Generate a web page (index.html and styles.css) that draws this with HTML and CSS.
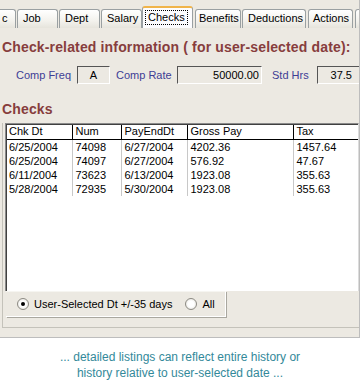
FILE: index.html
```html
<!DOCTYPE html>
<html lang="en">
<head>
  <title>Checks</title>
  <link rel="stylesheet" href="styles.css">
</head>
<body>

  <div class="app">
    <div class="tabs">
      <div class="tab tab-cut">c</div>
      <div class="tab">Job</div>
      <div class="tab">Dept</div>
      <div class="tab">Salary</div>
      <div class="tab active"><span class="focus">Checks</span></div>
      <div class="tab tab-benefits">Benefits</div>
      <div class="tab tab-deductions">Deductions</div>
      <div class="tab tab-actions">Actions</div>
      <div class="tab tab-end"></div>
    </div>

    <h2 class="title">Check-related information ( for user-selected date):</h2>

    <div class="comp-row">
      <span class="label label-freq">Comp Freq</span>
      <span class="field field-freq">A</span>
      <span class="label label-rate">Comp Rate</span>
      <span class="field field-rate">50000.00</span>
      <span class="label label-hrs">Std Hrs</span>
      <span class="field field-hrs">37.5</span>
    </div>

    <h2 class="title checks-title">Checks</h2>

    <div class="panel">
      <div class="list">
        <table class="grid">
          <thead>
            <tr>
              <th class="col-dt">Chk Dt</th>
              <th class="col-num">Num</th>
              <th class="col-end">PayEndDt</th>
              <th class="col-gross">Gross Pay</th>
              <th class="col-tax">Tax</th>
            </tr>
          </thead>
          <tbody>
            <tr><td>6/25/2004</td><td>74098</td><td>6/27/2004</td><td>4202.36</td><td>1457.64</td></tr>
            <tr><td>6/25/2004</td><td>74097</td><td>6/27/2004</td><td>576.92</td><td>47.67</td></tr>
            <tr><td>6/11/2004</td><td>73623</td><td>6/13/2004</td><td>1923.08</td><td>355.63</td></tr>
            <tr><td>5/28/2004</td><td>72935</td><td>5/30/2004</td><td>1923.08</td><td>355.63</td></tr>
          </tbody>
        </table>
      </div>

      <div class="radios">
        <label class="radio"><span class="dot checked"></span>User-Selected Dt +/-35 days</label>
        <label class="radio radio-all"><span class="dot"></span>All</label>
      </div>
    </div>
  </div>

  <p class="caption">... detailed listings can reflect entire history or<br>history relative to user-selected date ...</p>

</body>
</html>
```

FILE: styles.css
```css
body {
  margin: 0;
  background: #ffffff;
  font-family: "Liberation Sans", Arial, sans-serif;
  font-size: 11px;
  color: #000000;
}

.app {
  width: 359px;
  height: 337px;
  background: #ece9e2;
  border-right: 1px solid #bdbdbd;
  border-bottom: 1px solid #bdbdbd;
  overflow: hidden;
}

/* Onglets */
.tabs {
  display: flex;
  align-items: flex-end;
  gap: 1px;
  height: 28px;
  overflow: hidden;
}

.tab {
  flex: none;
  box-sizing: border-box;
  width: 41px;
  height: 19px;
  padding: 0 0 0 5px;
  line-height: 17px;
  border: 1px solid #9aa0a2;
  border-bottom: none;
  border-radius: 3px 3px 0 0;
  background: linear-gradient(#ffffff, #f3f2ed 60%, #e6e4dc);
  white-space: nowrap;
}

.tab-cut {
  width: 16px;
  padding-left: 2px;
  border-left: none;
  border-radius: 0 3px 0 0;
}

.tab.active {
  width: 51px;
  height: 22px;
  margin-left: -1px;
  padding: 2px 0 0 3px;
  line-height: 15px;
  border-top: 2px solid #f0b44a;
  background: #fcfcfe;
}

.focus {
  display: inline-block;
  padding: 0 2px;
  line-height: 13px;
  outline: 1px dotted #000000;
}

.tab-benefits { width: 46px; margin-left: 1px; padding-left: 3px; }
.tab-deductions { width: 64px; padding-left: 5px; }
.tab-actions { width: 45px; margin-left: 1px; padding-left: 4px; }
.tab-end { width: 10px; margin-left: 1px; }

/* Titres */
.title {
  margin: 11px 0 0 2px;
  font-size: 14px;
  line-height: 16px;
  font-weight: bold;
  letter-spacing: 0.15px;
  color: #873d3d;
}

.checks-title {
  margin-top: 17px;
}

/* Ligne Comp */
.comp-row {
  display: flex;
  align-items: center;
  height: 18px;
  margin-top: 11px;
  padding-left: 16px;
}

.label {
  flex: none;
  color: #3d3d95;
  white-space: nowrap;
}

.label-freq { width: 61px; }
.label-rate { width: 61px; margin-left: 6px; }
.label-hrs { width: 45px; margin-left: 10px; }

.field {
  flex: none;
  box-sizing: border-box;
  height: 18px;
  line-height: 16px;
  padding: 0 2px;
  border-top: 1px solid #555555;
  border-left: 1px solid #555555;
  border-bottom: 1px solid #ffffff;
  border-right: 1px solid #ffffff;
  text-align: right;
}

.field-freq { width: 33px; text-align: center; }
.field-rate { width: 85px; }
.field-hrs { width: 44px; padding-right: 8px; }

/* Cadre autour de la liste */
.panel {
  margin: 6px 0 0 2px;
  padding-bottom: 10px;
  border-left: 1px solid #c4c2ba;
  border-bottom: 1px solid #c4c2ba;
}

/* Liste */
.list {
  box-sizing: border-box;
  height: 168px;
  margin: 0 0 0 2px;
  background: #ffffff;
  border-top: 1px solid #8a8a8a;
  border-left: 1px solid #8a8a8a;
  border-right: 1px solid #dcdcdc;
  box-shadow: inset 1px 1px 0 #404040;
  padding: 1px 0 0 1px;
}

.grid {
  border-collapse: collapse;
  table-layout: fixed;
  width: 351px;
}

.grid th,
.grid td {
  box-sizing: border-box;
  padding: 0 0 0 3px;
  text-align: left;
  font-weight: normal;
  white-space: nowrap;
  overflow: hidden;
}

.grid th {
  height: 14px;
  line-height: 13px;
  border-bottom: 1px solid #000000;
  border-left: 1px solid #000000;
}

.grid td {
  height: 14px;
  line-height: 14px;
  border-left: 1px solid #c8c8c8;
}

.grid th:first-child,
.grid td:first-child {
  border-left: none;
  padding-left: 2px;
}

.col-dt { width: 65px; }
.col-num { width: 49px; }
.col-end { width: 66px; }
.col-gross { width: 106px; }

/* Boutons radio */
.radios {
  display: flex;
  align-items: center;
  box-sizing: border-box;
  width: 220px;
  height: 26px;
  margin-left: 3px;
  border-top: 1px solid #f6f5f1;
  border-right: 1px solid #ffffff;
  border-bottom: 1px solid #ffffff;
  box-shadow: 1px 1px 0 #a9a79f;
}

.radio {
  display: flex;
  align-items: center;
  white-space: nowrap;
}

.dot {
  box-sizing: border-box;
  width: 12px;
  height: 12px;
  margin: 0 5px 0 11px;
  border-radius: 50%;
  border: 1px solid #8c8a83;
  background: radial-gradient(circle, #ffffff 40%, #dedcd4);
  position: relative;
}

.dot.checked::after {
  content: "";
  position: absolute;
  left: 3px;
  top: 3px;
  width: 4px;
  height: 4px;
  border-radius: 50%;
  background: #000000;
}

.radio-all .dot {
  margin-left: 13px;
}

/* Légende */
.caption {
  margin: 11px 0 0;
  text-align: center;
  font-size: 12px;
  line-height: 16px;
  color: #33899a;
}
```
